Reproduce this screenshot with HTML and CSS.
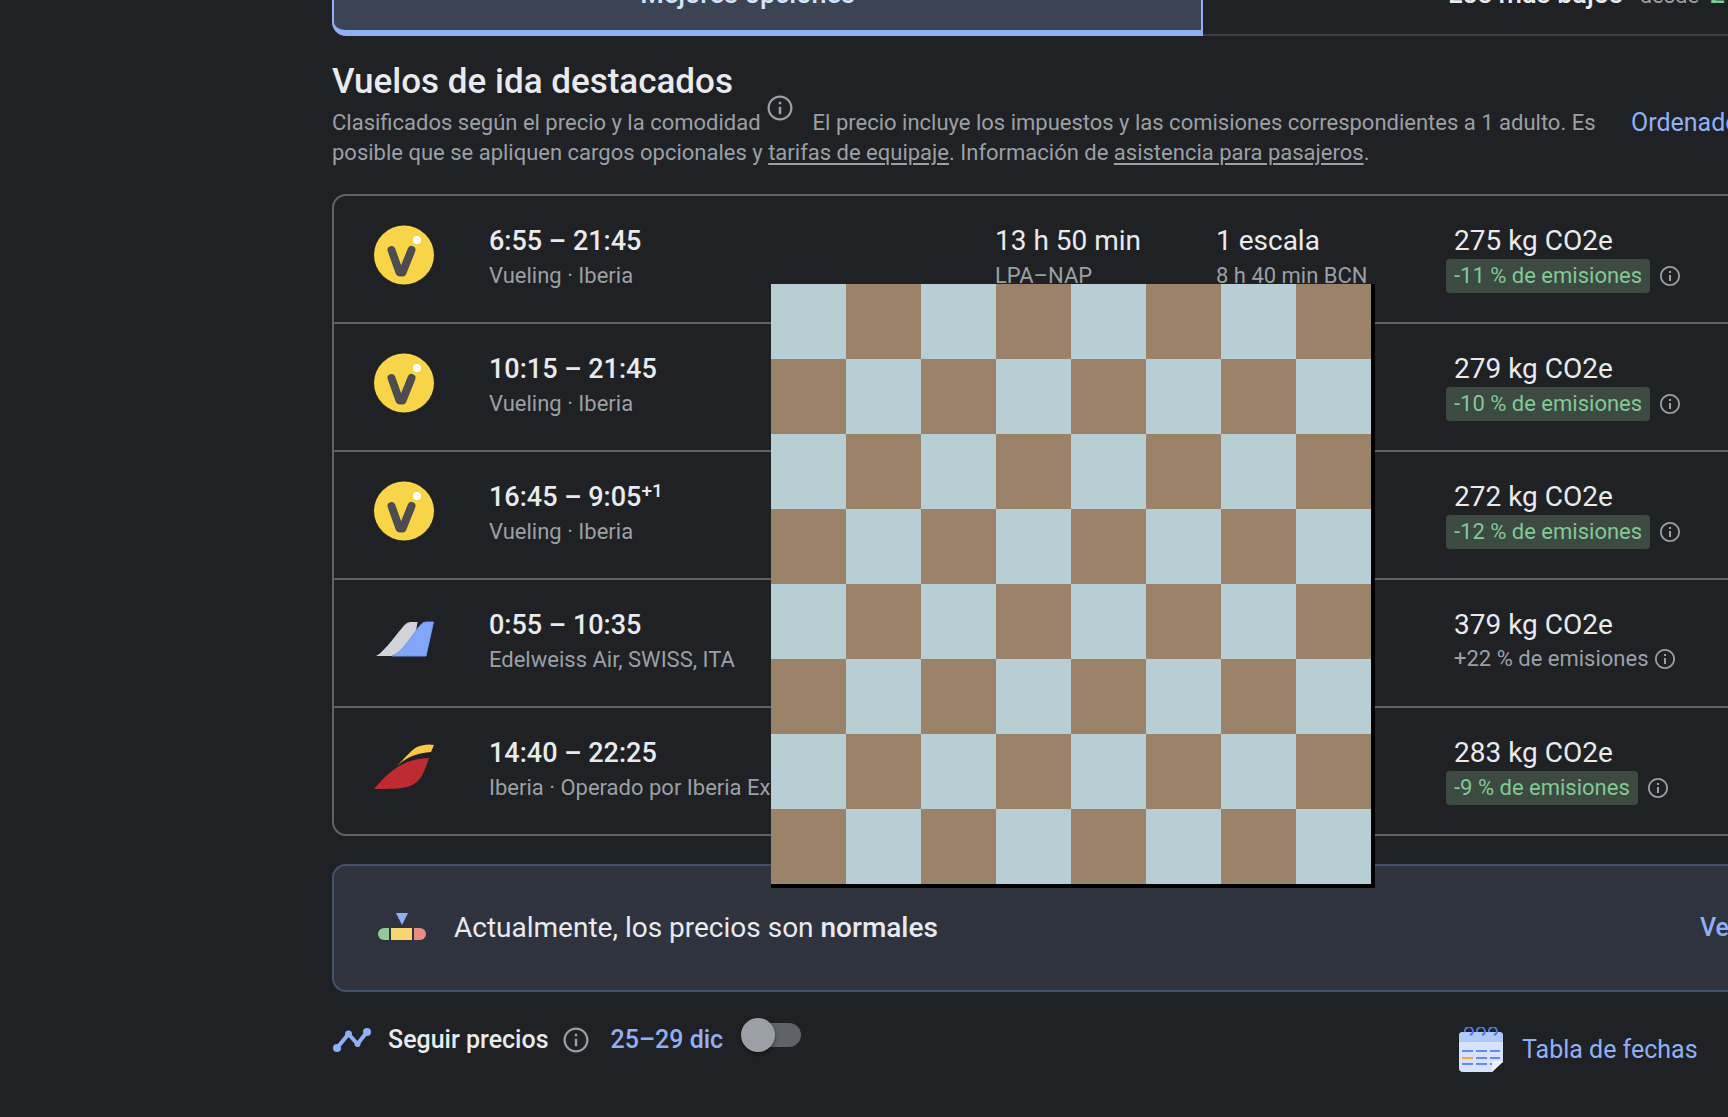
FILE: index.html
```
<!DOCTYPE html>
<html lang="es">
<head>
<meta charset="utf-8">
<title>Vuelos</title>
<link rel="stylesheet" href="styles.css">
</head>
<body>
<svg class="symbols" aria-hidden="true">
  <symbol id="info" viewBox="0 0 24 24"><path fill="currentColor" d="M11 7h2v2h-2zm0 4h2v6h-2zm1-9C6.480 2 2 6.480 2 12s4.480 10 10 10 10-4.480 10-10S17.520 2 12 2zm0 18.200c-4.530 0-8.200-3.670-8.200-8.200S7.470 3.800 12 3.800s8.200 3.670 8.200 8.200-3.670 8.200-8.200 8.200z"/></symbol>
  <symbol id="vueling" viewBox="0 0 60 60"><ellipse cx="30" cy="30" rx="30" ry="29.500" fill="#f8d448"/><path d="M17.500 25l8 22.500h3L37.500 25" fill="none" stroke="#4d4d4f" stroke-width="8" stroke-linecap="round" stroke-linejoin="round"/><circle cx="43" cy="15" r="4" fill="#fff"/></symbol>
  <symbol id="tails" viewBox="0 0 60 60"><path d="M2 47C9 44 22 26 30 16.500Q33 13 36 13H43.500L38 47Z" fill="#d3d4d8"/><path d="M18 47C29 43 38 26 46 16.500Q49 13 52 13H59.500L52 47Z" fill="#82a7fa" stroke="#6d96f4"/></symbol>
  <symbol id="iberia" viewBox="0 0 60 60"><path d="M0 52C18 31 31 22 55 21C50 35 48 44 36 49C28 52 17 52 0 52Z" fill="#be2b31"/><path d="M23 29C34 18 39 10 48 8.500Q54 7 60 8L57 15C43 16 33 20 23 29Z" fill="#f9c846"/></symbol>
</svg>
<main class="page">
  <div class="tabs" role="tablist">
    <button class="tab tab-active" role="tab" aria-selected="true">Mejores opciones</button>
    <button class="tab tab-cheap" role="tab" aria-selected="false">Los más bajos <small>desde</small> <b>267 €</b></button>
  </div>

  <header class="heading">
    <div class="heading-text">
      <h1>Vuelos de ida destacados</h1>
      <p>Clasificados según el precio y la comodidad<button class="info info-large" aria-label="Más información"><svg><use href="#info"/></svg></button>El precio incluye los impuestos y las comisiones correspondientes a 1 adulto. Es posible que se apliquen cargos opcionales y <a href="#">tarifas de equipaje</a>. Información de <a href="#">asistencia para pasajeros</a>.</p>
    </div>
    <button class="sort">Ordenados por</button>
  </header>

  <ul class="flights">
    <li class="flight">
      <svg class="logo"><use href="#vueling"/></svg>
      <div class="times"><h2>6:55 – 21:45</h2><p>Vueling · Iberia</p></div>
      <div class="duration"><h3>13 h 50 min</h3><p>LPA–NAP</p></div>
      <div class="stops"><h3>1 escala</h3><p>8 h 40 min BCN</p></div>
      <div class="co2"><h3>275 kg CO2e</h3><div class="emissions"><span class="badge">-11 % de emisiones</span><button class="info" aria-label="Información"><svg><use href="#info"/></svg></button></div></div>
    </li>
    <li class="flight">
      <svg class="logo"><use href="#vueling"/></svg>
      <div class="times"><h2>10:15 – 21:45</h2><p>Vueling · Iberia</p></div>
      <div class="co2"><h3>279 kg CO2e</h3><div class="emissions"><span class="badge">-10 % de emisiones</span><button class="info" aria-label="Información"><svg><use href="#info"/></svg></button></div></div>
    </li>
    <li class="flight">
      <svg class="logo"><use href="#vueling"/></svg>
      <div class="times"><h2>16:45 – 9:05<sup>+1</sup></h2><p>Vueling · Iberia</p></div>
      <div class="co2"><h3>272 kg CO2e</h3><div class="emissions"><span class="badge">-12 % de emisiones</span><button class="info" aria-label="Información"><svg><use href="#info"/></svg></button></div></div>
    </li>
    <li class="flight">
      <svg class="logo"><use href="#tails"/></svg>
      <div class="times"><h2>0:55 – 10:35</h2><p>Edelweiss Air, SWISS, ITA</p></div>
      <div class="co2"><h3>379 kg CO2e</h3><div class="emissions emissions-plain"><span>+22 % de emisiones</span><button class="info" aria-label="Información"><svg><use href="#info"/></svg></button></div></div>
    </li>
    <li class="flight">
      <svg class="logo"><use href="#iberia"/></svg>
      <div class="times"><h2>14:40 – 22:25</h2><p>Iberia · Operado por Iberia Express</p></div>
      <div class="co2"><h3>283 kg CO2e</h3><div class="emissions"><span class="badge">-9 % de emisiones</span><button class="info" aria-label="Información"><svg><use href="#info"/></svg></button></div></div>
    </li>
  </ul>

  <section class="insight">
    <svg class="gauge" viewBox="0 0 50 30"><path d="M19 0h12l-6 12z" fill="#8fb0f6"/><path d="M12 15v12H7a6 6 0 0 1 0-12z" fill="#93c99b"/><path d="M14 15h21v12H14z" fill="#f7d571"/><path d="M37 15h6a6 6 0 0 1 0 12h-6z" fill="#e88d83"/></svg>
    <p>Actualmente, los precios son <b>normales</b></p>
    <button class="history">Ver historial</button>
  </section>

  <footer class="tools">
    <div class="track">
      <svg class="trend" viewBox="0 0 38 26"><path d="M4 21L15.500 7l9 10L34 5" fill="none" stroke="#8fb0f6" stroke-width="4"/><g fill="#8fb0f6"><circle cx="4" cy="21" r="4"/><circle cx="15.500" cy="7" r="3.500"/><circle cx="24.500" cy="17" r="3"/><circle cx="34" cy="5" r="4"/></g></svg>
      <label for="track">Seguir precios</label>
      <button class="info info-large" aria-label="Información"><svg><use href="#info"/></svg></button>
      <span class="dates">25–29 dic</span>
      <input class="switch" id="track" type="checkbox" role="switch">
    </div>
    <button class="date-grid">
      <svg viewBox="0 0 46 46"><path d="M5 5h36q4 0 4 4v26L34 45H5q-4 0-4-4V9q0-4 4-4z" fill="#d7e3fb"/><path d="M5 5h36q4 0 4 4v6H1V9q0-4 4-4z" fill="#b0c9f7"/><path d="M4 24h11m3 0h11m3 0h10M18 31h11m3 0h10M4 37h11m3 0h11m3 0h4" stroke="#668ae9" stroke-width="2"/><path d="M4 31h11" stroke="#efab3c" stroke-width="2"/><path d="M45 34L34 45V34z" fill="#edf2fd"/><g fill="none" stroke="#4f79e2" stroke-width="2"><path id="ring" d="M7 5a4 4 0 1 1 5 3"/><use href="#ring" x="12"/><use href="#ring" x="24"/></g></svg>
      Tabla de fechas
    </button>
  </footer>

  <div class="board" aria-hidden="true"></div>
</main>
</body>
</html>
```
FILE: styles.css
```
* { box-sizing: border-box; margin: 0; }

body {
  background: #202124;
  color: #e8eaed;
  font-family: Roboto, "Liberation Sans", sans-serif;
  font-size: 22px;
  line-height: 30px;
}

button {
  padding: 0;
  border: 0;
  background: none;
  color: inherit;
  font: inherit;
  white-space: nowrap;
  cursor: pointer;
}

.symbols { position: absolute; width: 0; height: 0; }

.page { position: relative; padding-left: 332px; overflow: hidden; }

.tabs {
  display: flex;
  align-items: flex-end;
  height: 36px;
}

.tab {
  flex: none;
  height: 76px;
  padding-bottom: 4px;
  font-size: 27px;
  font-weight: 500;
}

.tab-active {
  width: 871px;
  padding-right: 40px;
  border: 2px solid #8fb0f6;
  border-bottom-width: 6px;
  border-radius: 0 0 0 14px;
  background: #3c4353;
  color: #d2e3fc;
}

.tab-cheap {
  flex: 1;
  padding-left: 245px;
  border-bottom: 2px solid #3c4043;
  text-align: left;
}

.tab-cheap small { margin: 0 4px 0 10px; color: #9aa0a6; font-size: 22px; font-weight: 400; }
.tab-cheap b { color: #81c995; font-weight: 500; }

.heading {
  display: flex;
  align-items: flex-start;
  padding-top: 25px;
}

.heading-text { flex: 0 0 1276px; }

h1 {
  font-size: 35px;
  font-weight: 500;
  line-height: 42px;
}

.heading p { padding-top: 5px; color: #9aa0a6; }

.heading a { color: inherit; text-underline-offset: 3px; text-decoration-thickness: 2px; }

.sort {
  margin: 47px 0 0 23px;
  color: #8fb0f6;
  font-size: 25px;
}

.info { display: inline-flex; color: #9aa0a6; }
.info svg { width: 24px; height: 24px; }
.info-large svg { width: 30px; height: 30px; }
.heading .info { margin: -15px 18px -15px 4px; vertical-align: top; }

.flights {
  margin-top: 26px;
  padding: 0;
  border: 2px solid #5f6368;
  border-right: 0;
  border-radius: 14px 0 0 14px;
  list-style: none;
}

.flight {
  display: grid;
  grid-template-columns: 115px 506px 221px 238px 1fr;
  height: 128px;
  padding: 29px 0 0 40px;
  border-bottom: 2px solid #5f6368;
}

.flight:last-child { height: 126px; border-bottom: 0; }

.logo { width: 60px; height: 60px; }

.times { grid-column: 2; white-space: nowrap; }

h2, h3 {
  font-size: 28px;
  font-weight: 400;
  line-height: 32px;
}

h2 { font-size: 27px; font-weight: 500; }

sup { font-size: 19px; line-height: 0; vertical-align: 9px; }

.flight p { padding-top: 4px; color: #9aa0a6; }

.co2 { grid-column: 5; }

.emissions { display: flex; align-items: center; gap: 8px; margin-left: -8px; padding-top: 2px; }
.emissions-plain { gap: 4px; margin-left: 0; padding-top: 3px; color: #9aa0a6; }

.badge {
  height: 34px;
  padding: 0 8px;
  border-radius: 4px;
  background: #3c4a41;
  color: #81c995;
  line-height: 34px;
}

.insight {
  display: flex;
  align-items: center;
  height: 128px;
  margin-top: 28px;
  padding-left: 43px;
  border: 2px solid #43526b;
  border-right: 0;
  border-radius: 14px 0 0 14px;
  background: #2f333e;
  font-size: 28px;
}

.gauge { flex: none; width: 50px; height: 30px; margin-right: 27px; }
.insight b { font-weight: 500; }

.insight p { flex: none; width: 1246px; }

.history { color: #8fb0f6; font-size: 25px; font-weight: 500; }

.tools {
  display: flex;
  align-items: flex-start;
  padding-top: 26px;
}

.track { display: flex; align-items: center; width: 1126px; height: 44px; font-size: 25px; font-weight: 500; }
.trend { width: 38px; height: 26px; margin: 0 17px 0 1px; }
.track .info { margin: 0 20px 0 12px; }
.dates { color: #8fb0f6; }

.switch {
  position: relative;
  width: 56px;
  height: 24px;
  margin: 0 0 10px 22px;
  border-radius: 12px;
  background: #5f6368;
  appearance: none;
}

.switch::before {
  content: "";
  position: absolute;
  top: -5px;
  left: -4px;
  width: 34px;
  height: 34px;
  border-radius: 50%;
  background: #9aa0a6;
  box-shadow: 0 2px 4px rgb(0 0 0 / 40%);
}

.date-grid {
  display: flex;
  align-items: center;
  gap: 18px;
  margin-top: 9px;
  color: #8fb0f6;
  font-size: 25px;
}

.date-grid svg { width: 46px; height: 46px; }

/* Board window floating over the results */
.board {
  position: absolute;
  top: 284px;
  left: 771px;
  width: 604px;
  height: 604px;
  border: solid #000;
  border-width: 0 4px 4px 0;
  background: repeating-conic-gradient(#9b8369 0 25%, #b7ced4 0 50%) 0 0 / 150px 150px;
}
```
